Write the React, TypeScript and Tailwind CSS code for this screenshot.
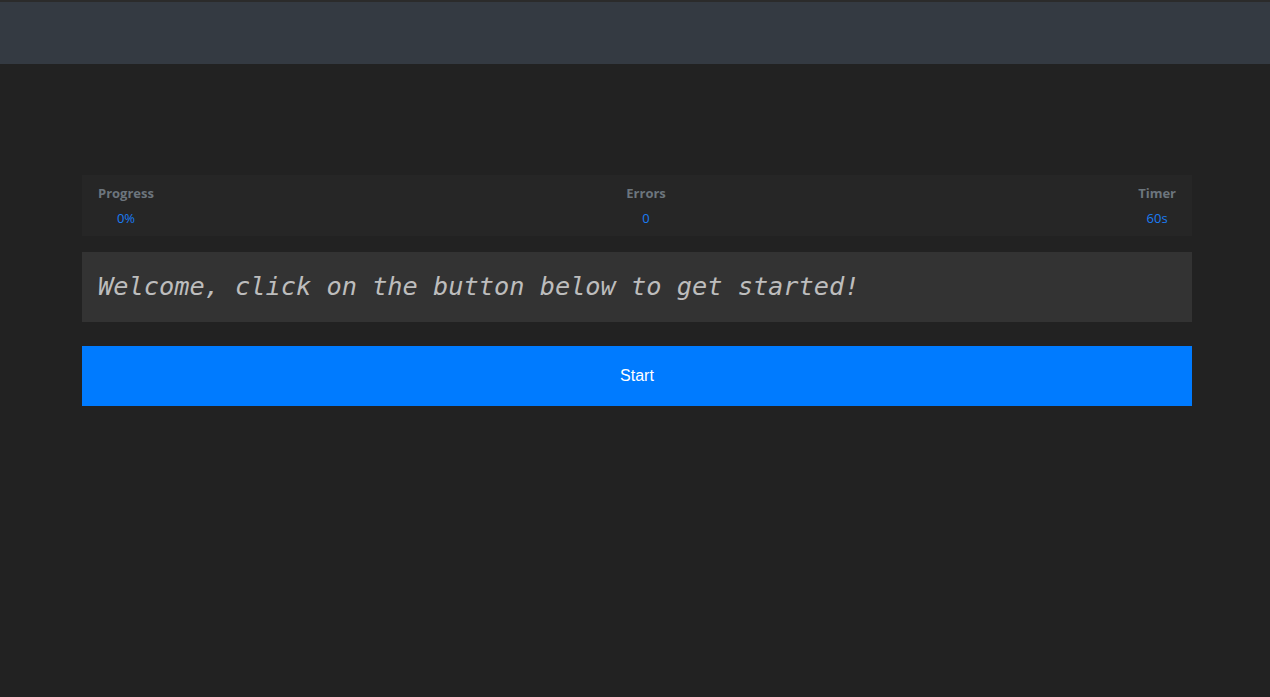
export default function App() {
  return (
    <div className="min-h-[697px] bg-[#222222] font-['Open_Sans',sans-serif]">
      <header className="h-16 border-t-2 border-[#2b2b2b] bg-[#343a42]" />
      <main className="ml-[82px] w-[1110px] pt-[111px]">
        <div className="flex h-[61px] justify-between bg-[#262626] px-4 pt-[9px] text-[13px]">
          <div className="text-center">
            <div className="font-bold text-[#6c757d]">Progress</div>
            <div className="mt-[5px] text-[#1a7cf5]">0%</div>
          </div>
          <div className="text-center">
            <div className="font-bold text-[#6c757d]">Errors</div>
            <div className="mt-[5px] text-[#1a7cf5]">0</div>
          </div>
          <div className="text-center">
            <div className="font-bold text-[#6c757d]">Timer</div>
            <div className="mt-[5px] text-[#1a7cf5]">60s</div>
          </div>
        </div>
        <div className="mt-4 flex h-[70px] items-center bg-[#333333] px-4">
          <p className="font-['DejaVu_Sans_Mono',monospace] text-[25.3px] italic text-[#bdbdbd]">
            Welcome, click on the button below to get started!
          </p>
        </div>
        <button className="mt-6 flex h-[60px] w-full items-center justify-center bg-[#007bff] font-['Liberation_Sans',sans-serif] text-base text-white">
          Start
        </button>
      </main>
    </div>
  );
}
